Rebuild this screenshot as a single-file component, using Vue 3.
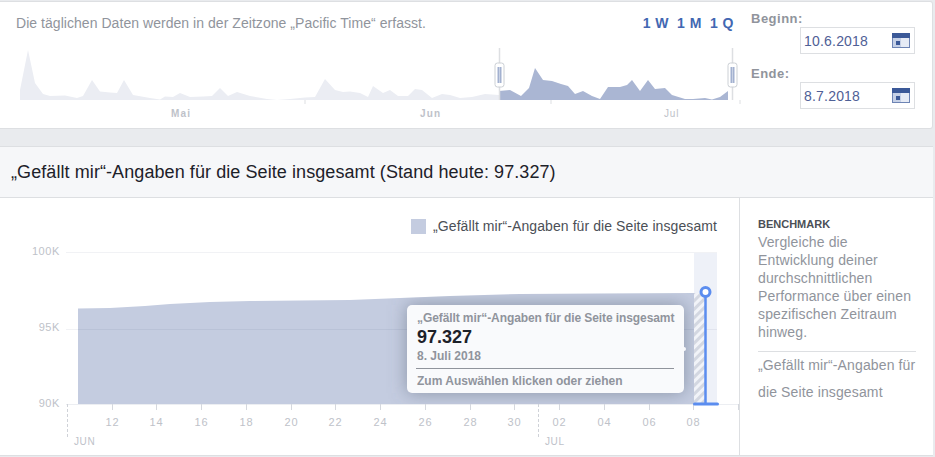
<template>
  <div class="page">
    <section class="range-panel">
      <div class="range-main">
        <div class="range-top">
          <span class="note">Die täglichen Daten werden in der Zeitzone „Pacific Time“ erfasst.</span>
          <div class="quick">
            <a v-for="item in quickRanges" :key="item">{{ item }}</a>
          </div>
        </div>
        <svg class="mini-chart" width="745" height="84" viewBox="0 41 745 84">
          <polygon :points="miniBefore" fill="#ebedf3" />
          <polygon :points="miniSelected" fill="#aab6d3" />
          <line v-for="x in miniTicks" :key="x" :x1="x" :x2="x" y1="100" y2="104" stroke="#dddfe2" />
          <text v-for="m in months" :key="m.label" :x="m.x" y="117" class="month" :class="{ thin: m.thin }">{{ m.label }}</text>
          <g v-for="x in handles" :key="x">
            <line :x1="x" :x2="x" y1="48" y2="100" stroke="#dddfe2" stroke-width="1.5" />
            <rect :x="x - 4.5" y="63" width="9" height="24" rx="2.5" fill="#fff" stroke="#ccd0d5" />
            <rect :x="x - 2" y="67" width="4" height="16" fill="#a3b1d0" />
            <rect :x="x - 0.5" y="67" width="1" height="16" fill="#c9d2e4" />
          </g>
        </svg>
      </div>
      <div class="dates">
        <div v-for="d in dates" :key="d.label" class="date-field">
          <label>{{ d.label }}</label>
          <div class="date-input">
            <span>{{ d.value }}</span>
            <svg width="18" height="15" viewBox="0 0 18 15">
              <rect width="18" height="15" fill="#e6ebf5" />
              <rect width="18" height="5" fill="#3b5998" />
              <rect y="14" width="18" height="1" fill="#6d84b4" />
              <rect x="0" y="5" width="1" height="10" fill="#6d84b4" />
              <rect x="17" y="5" width="1" height="10" fill="#6d84b4" />
              <rect x="1" y="5" width="8" height="9" fill="#c5d0e6" />
              <rect x="4" y="8" width="4" height="4" fill="#3b5998" />
            </svg>
          </div>
        </div>
      </div>
    </section>

    <h2 class="title">„Gefällt mir“-Angaben für die Seite insgesamt (Stand heute: 97.327)</h2>

    <section class="chart-row">
      <div class="chart-col">
        <div class="legend">
          <i class="swatch"></i>
          <span>„Gefällt mir“-Angaben für die Seite insgesamt</span>
        </div>
        <svg class="main-chart" width="739" height="215" viewBox="0 240 739 215">
          <defs>
            <pattern id="hatch" width="6" height="6" patternUnits="userSpaceOnUse" patternTransform="rotate(45)">
              <rect width="6" height="6" fill="#f1f3f8" />
              <rect width="3" height="6" fill="#d3d7e1" />
            </pattern>
            <clipPath id="area-clip"><polygon :points="areaPoints" /></clipPath>
            <filter id="blur" x="-20%" y="-40%" width="140%" height="180%">
              <feGaussianBlur stdDeviation="9" />
            </filter>
          </defs>
          <rect x="694" y="252" width="23" height="152" fill="#eef1f8" />
          <line x1="66" x2="717" y1="252.5" y2="252.5" stroke="#f1f2f5" />
          <polygon :points="areaPoints" fill="#c4cce0" />
          <g clip-path="url(#area-clip)">
            <rect x="407" y="305" width="277" height="88" fill="#5a6478" fill-opacity="0.55" filter="url(#blur)" />
          </g>
          <line x1="66" x2="717" y1="329.5" y2="329.5" stroke="#0a1e50" stroke-opacity="0.06" />
          <rect x="694" y="293" width="11" height="111" fill="url(#hatch)" />
          <text v-for="l in yLabels" :key="l.text" x="60" :y="l.y" class="y-label">{{ l.text }}</text>
          <line x1="66" x2="740" y1="404.5" y2="404.5" stroke="#eceef2" />
          <g v-for="t in ticks" :key="t.label">
            <line :x1="t.x" :x2="t.x" y1="404" y2="410" stroke="#d5d8de" />
            <text :x="t.x" y="426" class="x-label">{{ t.label }}</text>
          </g>
          <line x1="738.5" x2="738.5" y1="404" y2="410" stroke="#d5d8de" />
          <g v-for="m in axisMonths" :key="m.label">
            <line :x1="m.x" :x2="m.x" y1="404" y2="437" stroke="#cfd2d8" stroke-dasharray="3 2" />
            <text :x="m.x + 6.5" y="445" class="axis-month">{{ m.label }}</text>
          </g>
          <line x1="705.5" x2="705.5" y1="292" y2="404" stroke="#5b8def" stroke-width="2.5" />
          <line x1="694.5" x2="717.5" y1="404" y2="404" stroke="#5b8def" stroke-width="3" stroke-linecap="round" />
          <circle cx="705.5" cy="292" r="4.5" fill="#fff" stroke="#5b8def" stroke-width="3" />
        </svg>
        <div class="tooltip">
          <div class="tip-name">„Gefällt mir“-Angaben für die Seite insgesamt</div>
          <div class="tip-value">97.327</div>
          <div class="tip-date">8. Juli 2018</div>
          <div class="tip-hint">Zum Auswählen klicken oder ziehen</div>
        </div>
      </div>
      <aside class="sidebar">
        <strong>BENCHMARK</strong>
        <p>Vergleiche die Entwicklung deiner durchschnittlichen Performance über einen spezifischen Zeitraum hinweg.</p>
        <div class="metric">„Gefällt mir“-Angaben für die Seite insgesamt</div>
      </aside>
    </section>
  </div>
</template>

<script setup>
const quickRanges = ['1 W', '1 M', '1 Q'];

const dates = [
  { label: 'Beginn:', value: '10.6.2018' },
  { label: 'Ende:', value: '8.7.2018' }
];

const months = [
  { label: 'Mai', x: 171 },
  { label: 'Jun', x: 420 },
  { label: 'Jul', x: 664, thin: true }
];
const miniTicks = [305, 551, 740];
const handles = [499.5, 732.5];

const miniBefore = '20,100 20,90 28,50 35,83 43,94 50,96 65,95.5 77,98 83,96 92,80 100,91.5 110,92.5 117,93 124,80 133,95 150,98 160,99.5 165,96.5 173,97 180,93 190,97 203,96.5 212,96 220,88 228,96 237,92 250,96 267,99 277,100 290,99 305,97.5 315,97 325,79 335,90 343,92 350,91.5 360,93 368,97 373,86 383,93 390,90 398,96 408,96 415,89 422,90 432,98 442,94 450,95 460,98 472,97 485,94 499,95 499,100';
const miniSelected = '499,100 499,91 510,90 521,96 529,88 535,68 543,80 552,81 561,84 568,86 575,94 583,91 592,96 600,99 608,87 620,87 627,85 632,80 640,91 648,80 655,89 665,88 672,95 685,99 693,99 705,98 712,99.5 720,97 728,91 728,100';

const areaPoints = '78,404 78,308.5 110,308 145,306 170,304 210,302 250,301 300,300.5 350,300 400,298 450,296 520,294 600,293.5 694,293 694,404';

const yLabels = [
  { text: '100K', y: 255 },
  { text: '95K', y: 331 },
  { text: '90K', y: 407 }
];

const tickLabels = ['12', '14', '16', '18', '20', '22', '24', '26', '28', '30', '02', '04', '06', '08'];
const ticks = tickLabels.map((label, i) => ({ label, x: Math.round(111.5 + i * 44.75) + 0.5 }));

const axisMonths = [
  { label: 'JUN', x: 67.5 },
  { label: 'JUL', x: 538.5 }
];
</script>

<style scoped>
.page {
  width: 935px;
  height: 457px;
  padding-top: 1px;
  box-sizing: border-box;
  overflow: hidden;
  background: #e9ebee;
  font-family: "Liberation Sans", Arial, sans-serif;
}

.range-panel {
  display: flex;
  width: 933px;
  height: 128px;
  box-sizing: border-box;
  background: #fff;
  border: 1px solid #dddfe2;
  border-left: none;
  border-radius: 0 3px 3px 0;
}

.range-main {
  width: 745px;
}

.range-top {
  display: flex;
  justify-content: space-between;
  height: 39px;
  padding: 13px 11px 0 16px;
  box-sizing: border-box;
}

.note {
  font-size: 14px;
  line-height: 16px;
  letter-spacing: 0.045px;
  color: #90949c;
}

.quick {
  display: flex;
  gap: 8px;
  font-size: 14px;
  line-height: 16px;
  font-weight: bold;
  letter-spacing: 0.5px;
  color: #4267b2;
}

.mini-chart {
  display: block;
}

.month {
  font-size: 10px;
  font-weight: bold;
  letter-spacing: 1.2px;
  fill: #bec2c9;
}

.month.thin {
  font-weight: normal;
  letter-spacing: 0.8px;
}

.dates {
  display: flex;
  flex-direction: column;
  gap: 12px;
  padding-top: 9px;
  padding-left: 6px;
}

.date-field label {
  display: block;
  height: 16px;
  font-size: 13px;
  line-height: 16px;
  font-weight: bold;
  letter-spacing: 0.5px;
  color: #90949c;
}

.date-input {
  display: flex;
  align-items: center;
  justify-content: space-between;
  width: 115px;
  height: 27px;
  margin-left: 49px;
  padding: 0 4px 0 3px;
  box-sizing: border-box;
  border: 1px solid #dddfe2;
  font-size: 14px;
  letter-spacing: 0.2px;
  color: #4f6096;
}

.title {
  margin: 17px 0 0;
  width: 933px;
  height: 52px;
  box-sizing: border-box;
  padding: 0 11px;
  background: #f6f7f9;
  border: 1px solid #dddfe2;
  border-left: none;
  border-right: none;
  font-size: 18px;
  font-weight: normal;
  letter-spacing: 0.08px;
  line-height: 50px;
  color: #1d2129;
}

.chart-row {
  display: flex;
  width: 933px;
  height: 257px;
  background: #fff;
  border-bottom: 1px solid #dddfe2;
}

.chart-col {
  position: relative;
  width: 739px;
  border-right: 1px solid #dddfe2;
}

.legend {
  display: flex;
  align-items: center;
  justify-content: flex-end;
  gap: 7px;
  height: 42px;
  box-sizing: border-box;
  padding: 14px 22px 0 0;
  font-size: 14px;
  letter-spacing: 0.085px;
  color: #4b4f56;
}

.swatch {
  width: 15px;
  height: 15px;
  background: #c4cce0;
}

.main-chart {
  display: block;
}

.y-label {
  font-size: 11px;
  letter-spacing: 0.6px;
  text-anchor: end;
  fill: #bec2c9;
}

.x-label {
  font-size: 11px;
  letter-spacing: 1px;
  text-anchor: middle;
  fill: #bec2c9;
}

.axis-month {
  font-size: 10px;
  letter-spacing: 0.6px;
  fill: #bec2c9;
}

.tooltip {
  position: absolute;
  left: 407px;
  top: 107px;
  width: 277px;
  height: 88px;
  box-sizing: border-box;
  padding: 6px 10px 0 9px;
  background: #f9fafc;
  border-radius: 5px;
  color: #90949c;
  font-size: 12px;
  font-weight: bold;
}

.tooltip::after {
  content: "";
  position: absolute;
  right: -2px;
  top: 42px;
  width: 4px;
  height: 4px;
  border-radius: 50%;
  background: #f9fafc;
}

.tip-name {
  padding-left: 1px;
  line-height: 15px;
  letter-spacing: -0.09px;
  white-space: nowrap;
}

.tip-value {
  padding-left: 1px;
  font-size: 18px;
  line-height: 23px;
  color: #1d2129;
}

.tip-date {
  padding: 0 0 4px 1px;
  line-height: 15px;
  border-bottom: 1px solid #90949c;
}

.tip-hint {
  padding-left: 1px;
  line-height: 24px;
}

.sidebar {
  flex: 1;
  padding: 17px 17px 0 18px;
  font-size: 14px;
  line-height: 18px;
  letter-spacing: 0.13px;
  color: #90949c;
}

.sidebar strong {
  display: block;
  font-size: 11px;
  letter-spacing: 0;
  color: #4b4f56;
}

.sidebar p {
  margin: 0;
}

.metric {
  margin-top: 10px;
  border-top: 1px solid #dddfe2;
  line-height: 27px;
}
</style>
